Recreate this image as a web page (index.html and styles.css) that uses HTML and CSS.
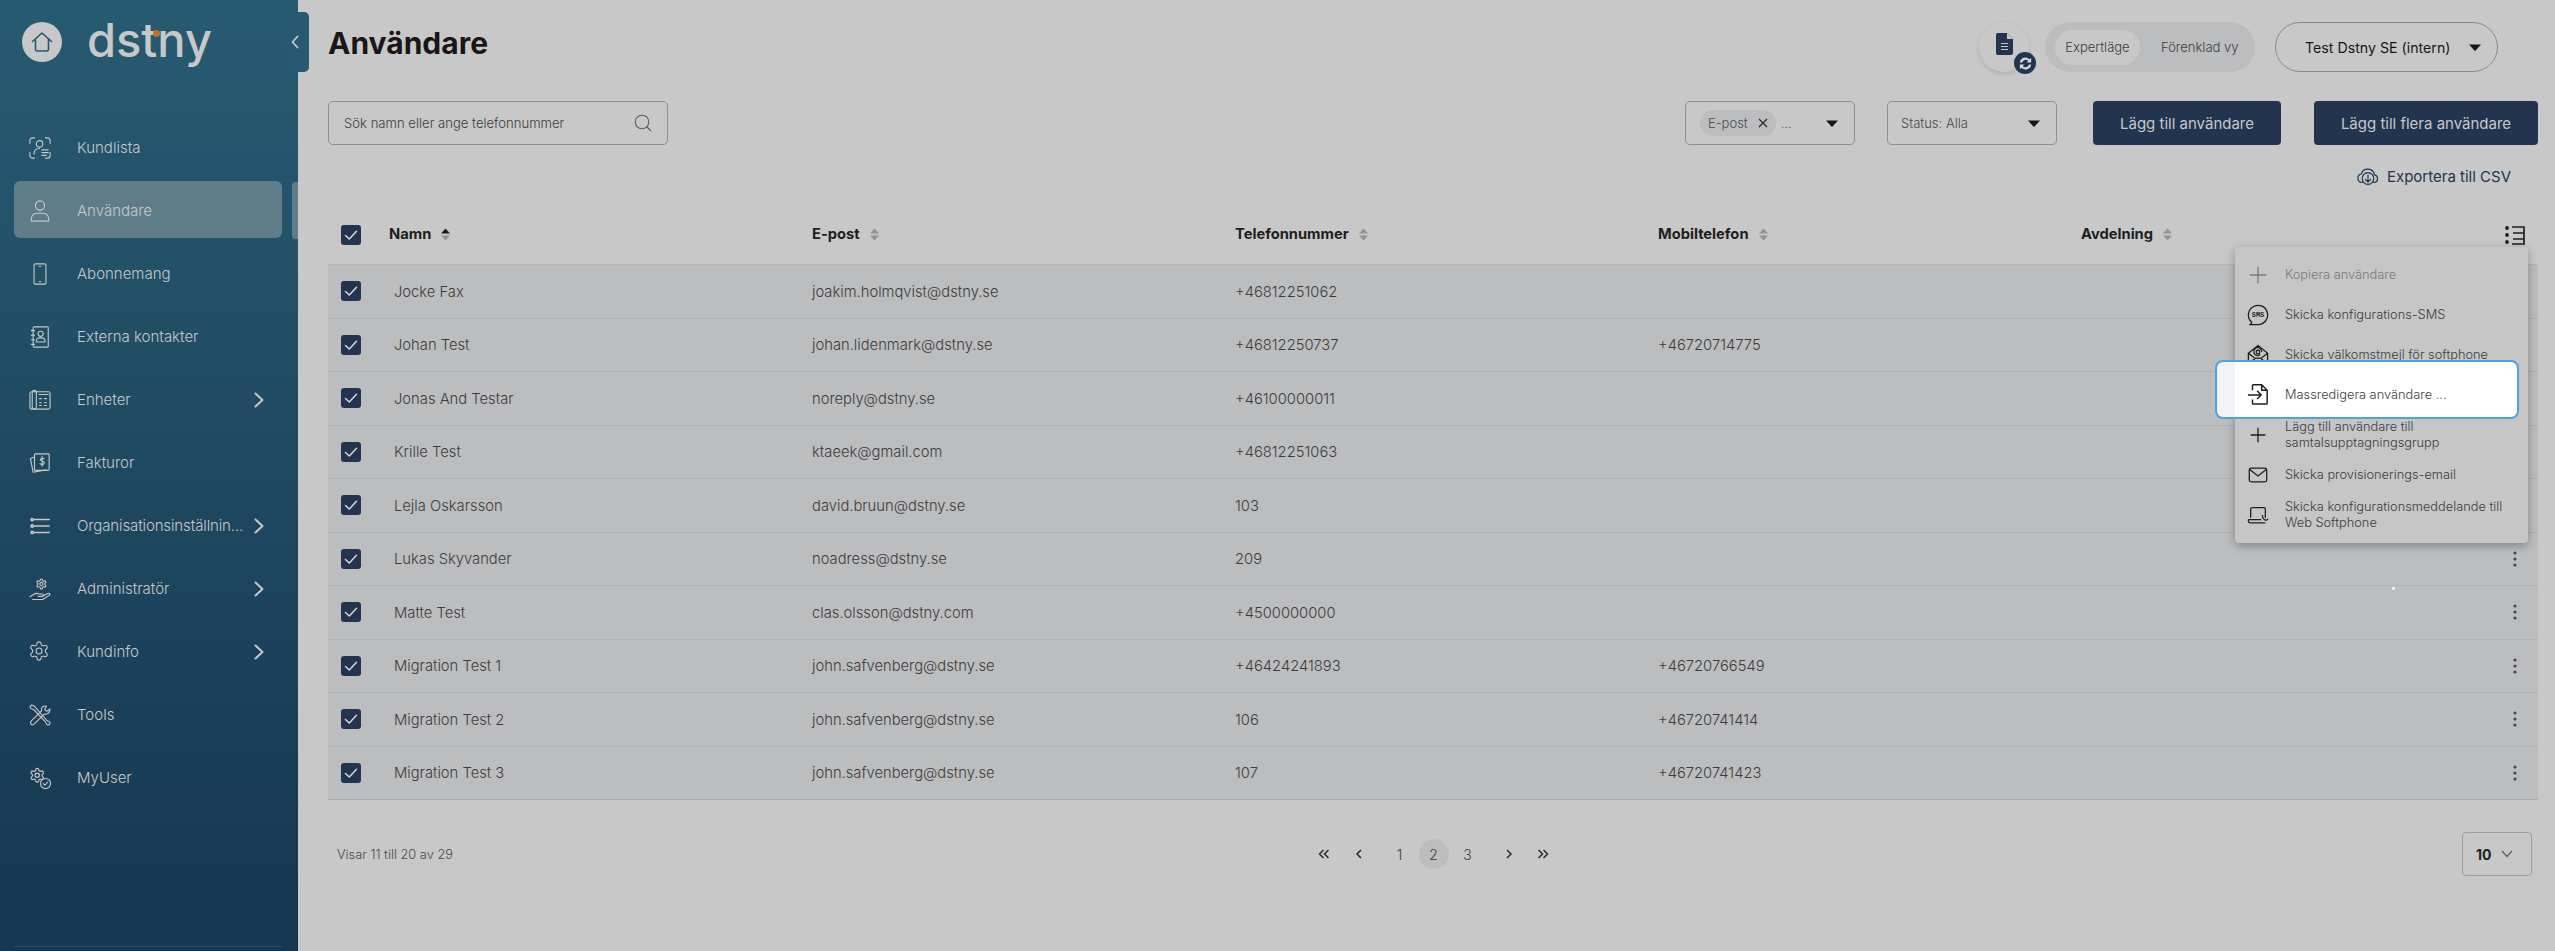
FILE: index.html
```html
<!DOCTYPE html>
<html lang="sv">
<head>
<meta charset="utf-8">
<title>Användare</title>
<link rel="stylesheet" href="styles.css">
</head>
<body>
<svg class="defs" width="0" height="0" aria-hidden="true">
  <symbol id="chev" viewBox="0 0 12 18"><path d="M2.500 2.500 9.500 9 2.500 15.500" fill="none" stroke="currentColor" stroke-width="2" stroke-linecap="round" stroke-linejoin="round"/></symbol>
  <symbol id="check" viewBox="0 0 20 20"><rect width="20" height="20" rx="3" fill="#22344f"/><path d="M4.500 10.500 8.300 14 15.500 6.300" fill="none" stroke="#d6d8da" stroke-width="1.500" stroke-linecap="round" stroke-linejoin="round"/></symbol>
  <symbol id="sort" viewBox="0 0 9 13"><path d="M4.500 .5 9 5.500H0Z" fill="currentColor"/><path d="M4.500 12.500 0 7.500H9Z" fill="#939496"/></symbol>
  <symbol id="sortoff" viewBox="0 0 9 13"><path d="M4.500 .5 9 5.500H0Z" fill="#939496"/><path d="M4.500 12.500 0 7.500H9Z" fill="#939496"/></symbol>
  <symbol id="kebab" viewBox="0 0 6 16"><circle cx="3" cy="2" r="1.600"/><circle cx="3" cy="8" r="1.600"/><circle cx="3" cy="14" r="1.600"/></symbol>
  <symbol id="caret" viewBox="0 0 12 7"><path d="M0 .5H12L6.600 6.400a.8.8 0 0 1-1.200 0Z" fill="currentColor"/></symbol>
  <symbol id="gear" viewBox="0 0 24 24" overflow="visible"><path d="M12.220 2h-.44a2 2 0 0 0-2 2v.18a2 2 0 0 1-1 1.730l-.43.250a2 2 0 0 1-2 0l-.15-.08a2 2 0 0 0-2.730.730l-.22.380a2 2 0 0 0 .730 2.730l.15.100a2 2 0 0 1 1 1.720v.510a2 2 0 0 1-1 1.740l-.15.090a2 2 0 0 0-.730 2.730l.22.380a2 2 0 0 0 2.730.730l.15-.08a2 2 0 0 1 2 0l.43.250a2 2 0 0 1 1 1.730V20a2 2 0 0 0 2 2h.44a2 2 0 0 0 2-2v-.18a2 2 0 0 1 1-1.730l.43-.25a2 2 0 0 1 2 0l.15.08a2 2 0 0 0 2.730-.730l.22-.39a2 2 0 0 0-.730-2.730l-.15-.08a2 2 0 0 1-1-1.740v-.5a2 2 0 0 1 1-1.740l.15-.09a2 2 0 0 0 .730-2.730l-.22-.38a2 2 0 0 0-2.730-.730l-.15.08a2 2 0 0 1-2 0l-.43-.25a2 2 0 0 1-1-1.730V4a2 2 0 0 0-2-2Z"/><circle cx="12" cy="12" r="3.200"/></symbol>
</svg>

<div class="app">
  <aside class="sidebar">
    <div class="brand">
      <span class="home">
        <svg width="22" height="22" viewBox="0 0 22 22"><path d="M1.500 10.500 11 2l9.500 8.500M4.500 8.500v9.500a2 2 0 0 0 2 2h9a2 2 0 0 0 2-2V8.500" fill="none" stroke="#27586e" stroke-width="1.600" stroke-linecap="round" stroke-linejoin="round"/></svg>
      </span>
      <span class="logo">dstny<i class="logo-dot"></i></span>
    </div>
    <button class="collapse" aria-label="Fäll ihop">
      <svg width="8" height="14" viewBox="0 0 8 14"><path d="M6.500 1.500 1.500 7l5 5.500" fill="none" stroke="#c8c8c8" stroke-width="1.800" stroke-linecap="round" stroke-linejoin="round"/></svg>
    </button>
    <nav class="nav">
      <a class="nav-item">
        <svg class="nav-icon" viewBox="0 0 24 24"><path d="M1 7V3.500A2.500 2.500 0 0 1 3.500 1H6M18 1h2.500A2.500 2.500 0 0 1 23 3.500V7M1 17v3.500A2.500 2.500 0 0 0 3.500 23H6M18 23h2.500a2.500 2.500 0 0 0 2.500-2.500V17"/><circle cx="11.500" cy="7.500" r="3.500"/><path d="M5.500 18.500c0-4 2.500-6 6-6M14 14h7M14 17h7M14 20h5"/></svg>
        <span class="nav-label">Kundlista</span>
      </a>
      <a class="nav-item active">
        <svg class="nav-icon" viewBox="0 0 24 24"><circle cx="12" cy="6" r="5"/><path d="M2.500 23v-2.500a6 6 0 0 1 6-6h7a6 6 0 0 1 6 6V23Z"/></svg>
        <span class="nav-label">Användare</span>
      </a>
      <a class="nav-item">
        <svg class="nav-icon" viewBox="0 0 24 24"><rect x="5.500" y="1" width="13" height="22" rx="1.500"/><path d="M11 3.500h2M11 20.500h2"/></svg>
        <span class="nav-label">Abonnemang</span>
      </a>
      <a class="nav-item">
        <svg class="nav-icon" viewBox="0 0 24 24"><rect x="4.500" y="1" width="16.500" height="22" rx="1"/><circle cx="12.700" cy="8.500" r="2.800"/><path d="M8 17.500v-1a3.500 3.500 0 0 1 3.500-3.500h2.500a3.500 3.500 0 0 1 3.500 3.500v1ZM2.500 5h3.500M2.500 10h3.500M2.500 15h3.500M2.500 20h3.500"/></svg>
        <span class="nav-label">Externa kontakter</span>
      </a>
      <a class="nav-item">
        <svg class="nav-icon" viewBox="0 0 24 24"><rect x="1" y="3" width="22" height="19" rx="2"/><rect x="3.500" y="1.500" width="4.500" height="20" rx="2"/><path d="M11 6h10M11.500 10.500h2M17 10.500h2M11.500 15h2M17 15h2M11.500 18h2M17 18h2"/></svg>
        <span class="nav-label">Enheter</span>
        <svg class="nav-chev"><use href="#chev"/></svg>
      </a>
      <a class="nav-item">
        <svg class="nav-icon" viewBox="0 0 24 24"><path d="M6 5.500 1.500 7l3 15 14-2.500"/><rect x="6" y="2" width="16" height="18" rx="1"/><path d="M16.500 7.500c-.8-1-3.800-1.200-4 .7-.2 2 4.200 1.300 4.200 3.600 0 2-3.200 2.200-4.700.9M14.300 4.500v11"/></svg>
        <span class="nav-label">Fakturor</span>
      </a>
      <a class="nav-item">
        <svg class="nav-icon nav-icon-bold" viewBox="0 0 24 24"><path d="M6 5h16M6 12h16M6 19h16"/><circle cx="3.500" cy="5" r="1.300"/><circle cx="3.500" cy="12" r="1.300"/><circle cx="3.500" cy="19" r="1.300"/></svg>
        <span class="nav-label nav-label-tight">Organisationsinställnin...</span>
        <svg class="nav-chev"><use href="#chev"/></svg>
      </a>
      <a class="nav-item">
        <svg class="nav-icon" viewBox="0 0 24 24"><svg x="7" y="0" width="13" height="13"><use href="#gear" class="gear-s"/></svg><path d="M1 20.500 5 18c2-1.500 4-1.500 6-.5h3.500c2 0 2 2.500 0 2.500H10M14.500 20l6-3c2-1 3 1 1.500 2l-7 4.500H7L4 23.500"/></svg>
        <span class="nav-label">Administratör</span>
        <svg class="nav-chev"><use href="#chev"/></svg>
      </a>
      <a class="nav-item">
        <svg class="nav-icon" viewBox="1 1 22 22"><use href="#gear"/></svg>
        <span class="nav-label">Kundinfo</span>
        <svg class="nav-chev"><use href="#chev"/></svg>
      </a>
      <a class="nav-item">
        <svg class="nav-icon" viewBox="0 0 24 24"><path d="M1 3l2-2 3 1.500L19.500 18l3 1.500.5 2-1.500 1.500-2-.5-1.500-3L5 6 2 5Z"/><path d="M23 5.500 19.500 8 17 6l2-3.500c-2.500-1-5.500.5-5.500 3.500 0 .8.200 1 .200 1.500L2.500 18.500C.5 21 3 24 5.500 22l11-11c3 1 6.500-1.500 6.500-5.500Z"/></svg>
        <span class="nav-label">Tools</span>
      </a>
      <a class="nav-item">
        <svg class="nav-icon" viewBox="0 0 24 24"><svg x="0" y="0" width="18" height="18"><use href="#gear" class="gear-m"/></svg><circle cx="18" cy="18" r="5.500" class="nav-badge"/><path d="M15.500 18.200l1.800 1.500 3.200-3.200"/></svg>
        <span class="nav-label">MyUser</span>
      </a>
    </nav>
    <div class="side-foot"></div>
  </aside>

  <main class="main">
    <header class="topbar">
      <h1 class="title">Användare</h1>
      <div class="top-tools">
        <span class="doc-btn">
          <svg width="17" height="22" viewBox="0 0 17 22"><path d="M2 0h9l6 6v14a2 2 0 0 1-2 2H2a2 2 0 0 1-2-2V2a2 2 0 0 1 2-2Z" fill="#22344f"/><path d="M11 0v6h6Z" fill="#c8c8c8"/><path d="M5 10.500h7M5 13.500h7M5 16.500h7" stroke="#c8c8c8" stroke-width="1.200"/></svg>
          <span class="sync">
            <svg width="15" height="15" viewBox="0 0 16 16"><path d="M2 7a6 6 0 0 1 10.300-3.500L14 2v5H9l2-1.800A4 4 0 0 0 4.300 7ZM14 9a6 6 0 0 1-10.300 3.500L2 14V9h5l-2 1.800A4 4 0 0 0 11.700 9Z" fill="#d6d8da"/></svg>
          </span>
        </span>
        <div class="mode">
          <span class="mode-item on">Expertläge</span>
          <span class="mode-item">Förenklad vy</span>
        </div>
        <div class="org">
          <span>Test Dstny SE (intern)</span>
          <svg class="caret"><use href="#caret"/></svg>
        </div>
      </div>
    </header>

    <div class="controls">
      <div class="search">
        <span>Sök namn eller ange telefonnummer</span>
        <svg width="18" height="18" viewBox="0 0 18 18"><circle cx="8" cy="8" r="6.800" fill="none" stroke="#5a5c5e" stroke-width="1.100"/><path d="M13 13l4 4" stroke="#5a5c5e" stroke-width="1.100"/></svg>
      </div>
      <div class="spacer"></div>
      <div class="select select-cols">
        <span class="chip">E-post
          <svg width="10" height="10" viewBox="0 0 10 10"><path d="M1 1l8 8M9 1l-8 8" stroke="#2b2b2b" stroke-width="1.300"/></svg>
        </span>
        <span class="more">...</span>
        <svg class="caret"><use href="#caret"/></svg>
      </div>
      <div class="select select-status">
        <span>Status: Alla</span>
        <svg class="caret"><use href="#caret"/></svg>
      </div>
      <button class="btn btn-one">Lägg till användare</button>
      <button class="btn btn-many">Lägg till flera användare</button>
    </div>

    <div class="export">
      <svg width="22" height="18" viewBox="0 0 22 18"><path d="M6 15.500H5a4.300 4.300 0 0 1-.7-8.500 6.800 6.800 0 0 1 13.200.8A3.900 3.900 0 0 1 17 15.500h-1" fill="none" stroke="#22344f" stroke-width="1.200" stroke-linecap="round"/><circle cx="11" cy="11.500" r="5.800" fill="#c8c8c8" stroke="#22344f" stroke-width="1.200"/><path d="M11 8v7M8.300 12.300 11 15l2.700-2.700" fill="none" stroke="#22344f" stroke-width="1.200" stroke-linecap="round" stroke-linejoin="round"/></svg>
      <span>Exportera till CSV</span>
    </div>

    <div class="table">
      <div class="thead">
        <div class="cell-check"><svg class="cb"><use href="#check"/></svg></div>
        <div class="th th-on">Namn <svg class="sort"><use href="#sort"/></svg></div>
        <div class="th">E-post <svg class="sort"><use href="#sortoff"/></svg></div>
        <div class="th">Telefonnummer <svg class="sort"><use href="#sortoff"/></svg></div>
        <div class="th">Mobiltelefon <svg class="sort"><use href="#sortoff"/></svg></div>
        <div class="th">Avdelning <svg class="sort"><use href="#sortoff"/></svg></div>
        <div class="cell-act">
          <svg width="20" height="20" viewBox="0 0 20 20"><circle cx="2" cy="3" r="1.900" fill="#1e1e1e"/><circle cx="2" cy="10" r="1.900" fill="#1e1e1e"/><circle cx="2" cy="17" r="1.900" fill="#1e1e1e"/><path d="M7 2h12v6H8M19 8v6H8M7 19h12v-5" fill="none" stroke="#1e1e1e" stroke-width="1.700"/></svg>
        </div>
      </div>

      <div class="tr"><div class="cell-check"><svg class="cb"><use href="#check"/></svg></div><div class="td td-name">Jocke Fax</div><div class="td">joakim.holmqvist@dstny.se</div><div class="td">+46812251062</div><div class="td"></div><div class="td"></div><div class="cell-act"><svg class="kebab"><use href="#kebab"/></svg></div></div>
      <div class="tr"><div class="cell-check"><svg class="cb"><use href="#check"/></svg></div><div class="td td-name">Johan Test</div><div class="td">johan.lidenmark@dstny.se</div><div class="td">+46812250737</div><div class="td">+46720714775</div><div class="td"></div><div class="cell-act"><svg class="kebab"><use href="#kebab"/></svg></div></div>
      <div class="tr"><div class="cell-check"><svg class="cb"><use href="#check"/></svg></div><div class="td td-name">Jonas And Testar</div><div class="td">noreply@dstny.se</div><div class="td">+46100000011</div><div class="td"></div><div class="td"></div><div class="cell-act"><svg class="kebab"><use href="#kebab"/></svg></div></div>
      <div class="tr"><div class="cell-check"><svg class="cb"><use href="#check"/></svg></div><div class="td td-name">Krille Test</div><div class="td">ktaeek@gmail.com</div><div class="td">+46812251063</div><div class="td"></div><div class="td"></div><div class="cell-act"><svg class="kebab"><use href="#kebab"/></svg></div></div>
      <div class="tr"><div class="cell-check"><svg class="cb"><use href="#check"/></svg></div><div class="td td-name">Lejla Oskarsson</div><div class="td">david.bruun@dstny.se</div><div class="td">103</div><div class="td"></div><div class="td"></div><div class="cell-act"><svg class="kebab"><use href="#kebab"/></svg></div></div>
      <div class="tr"><div class="cell-check"><svg class="cb"><use href="#check"/></svg></div><div class="td td-name">Lukas Skyvander</div><div class="td">noadress@dstny.se</div><div class="td">209</div><div class="td"></div><div class="td"></div><div class="cell-act"><svg class="kebab"><use href="#kebab"/></svg></div></div>
      <div class="tr"><div class="cell-check"><svg class="cb"><use href="#check"/></svg></div><div class="td td-name">Matte Test</div><div class="td">clas.olsson@dstny.com</div><div class="td">+4500000000</div><div class="td"></div><div class="td"></div><div class="cell-act"><svg class="kebab"><use href="#kebab"/></svg></div></div>
      <div class="tr"><div class="cell-check"><svg class="cb"><use href="#check"/></svg></div><div class="td td-name">Migration Test 1</div><div class="td">john.safvenberg@dstny.se</div><div class="td">+46424241893</div><div class="td">+46720766549</div><div class="td"></div><div class="cell-act"><svg class="kebab"><use href="#kebab"/></svg></div></div>
      <div class="tr"><div class="cell-check"><svg class="cb"><use href="#check"/></svg></div><div class="td td-name">Migration Test 2</div><div class="td">john.safvenberg@dstny.se</div><div class="td">106</div><div class="td">+46720741414</div><div class="td"></div><div class="cell-act"><svg class="kebab"><use href="#kebab"/></svg></div></div>
      <div class="tr"><div class="cell-check"><svg class="cb"><use href="#check"/></svg></div><div class="td td-name">Migration Test 3</div><div class="td">john.safvenberg@dstny.se</div><div class="td">107</div><div class="td">+46720741423</div><div class="td"></div><div class="cell-act"><svg class="kebab"><use href="#kebab"/></svg></div></div>
    </div>

    <footer class="pager">
      <div class="count">Visar 11 till 20 av 29</div>
      <div class="pages">
        <svg class="pg" viewBox="0 0 12 12"><path d="M5.500 2 1.500 6l4 4M10.500 2l-4 4 4 4"/></svg>
        <svg class="pg pg-gap" viewBox="0 0 12 12"><path d="M8 2 4 6l4 4"/></svg>
        <span class="num">1</span>
        <span class="num cur">2</span>
        <span class="num">3</span>
        <svg class="pg pg-gap2" viewBox="0 0 12 12"><path d="M4 2l4 4-4 4"/></svg>
        <svg class="pg" viewBox="0 0 12 12"><path d="M1.500 2l4 4-4 4M6.500 2l4 4-4 4"/></svg>
      </div>
      <div class="size-wrap">
        <div class="size">
          <b>10</b>
          <svg width="12" height="8" viewBox="0 0 12 8"><path d="M1 1l5 5.500L11 1" fill="none" stroke="#5a5c5e" stroke-width="1.200"/></svg>
        </div>
      </div>
    </footer>
  </main>
</div>

<div class="menu">
  <div class="mi mi-off"><svg class="mi-ic" viewBox="0 0 24 24"><path d="M12 3v18M3 12h18"/></svg><span>Kopiera användare</span></div>
  <div class="mi"><svg class="mi-ic" viewBox="0 0 24 24"><path d="M3 22.500c1.500-.5 2-1.500 2.200-2.500A10.500 10.500 0 1 1 12 22.500Z"/><text x="12" y="14.700" class="sms">SMS</text></svg><span>Skicka konfigurations-SMS</span></div>
  <div class="mi"><svg class="mi-ic" viewBox="0 0 24 24"><path d="M1.500 10 12 1.500 22.500 10v12h-21ZM1.500 22 9 15.500h6L22.500 22M1.500 10l6.500 5M22.500 10 16 15"/><circle cx="12" cy="8.800" r="2"/><path d="M14.500 11.500a4.300 4.300 0 1 1 1.500-2.800"/></svg><span>Skicka välkomstmejl för softphone</span></div>
  <div class="mi"></div>
  <div class="mi"><svg class="mi-ic" viewBox="0 0 24 24"><path d="M12 4v16M4 12h16"/></svg><span>Lägg till användare till<br>samtalsupptagningsgrupp</span></div>
  <div class="mi"><svg class="mi-ic" viewBox="0 0 24 24"><rect x="2.500" y="4.500" width="19" height="15" rx="2"/><path d="M3 6l9 7 9-7"/></svg><span>Skicka provisionerings-email</span></div>
  <div class="mi"><svg class="mi-ic" viewBox="0 0 24 24"><path d="M4 15V5.500A1.500 1.500 0 0 1 5.500 4h13A1.500 1.500 0 0 1 20 5.500V15M1.500 17h14M1.500 17v1.500a2 2 0 0 0 2 2H20M17 12c-.5 2 .8 5 3 5.500 1 .2 2.500 0 2.500-1.500"/></svg><span>Skicka konfigurationsmeddelande till<br>Web Softphone</span></div>
</div>

<div class="spot">
  <div class="spot-inner">
    <svg class="spot-ic" viewBox="0 0 24 24"><path d="M6 8V3a1 1 0 0 1 1-1h9l6 6v14a1 1 0 0 1-1 1H7a1 1 0 0 1-1-1v-4M16 2v6h6M1 13h14M11 8.500l4.500 4.500-4.500 4.500"/></svg>
    <span>Massredigera användare ...</span>
  </div>
</div>
<i class="blip"></i>
</body>
</html>
```

FILE: styles.css
```css
* { box-sizing: border-box; }
html, body { margin: 0; height: 100%; }
body {
  background: #c8c8c8;
  font-family: Inter, "Liberation Sans", sans-serif;
  color: #2b2b2b;
  overflow: hidden;
  position: relative;
}
.defs { position: absolute; }
.app { display: flex; height: 951px; }

/* sidebar */
.sidebar {
  width: 298px;
  flex: none;
  position: relative;
  background: linear-gradient(180deg, #275b71 0%, #173650 100%);
  color: #c8c8c8;
  display: flex;
  flex-direction: column;
}
.brand { height: 115px; padding: 22px 0 0 22px; display: flex; align-items: flex-start; gap: 25px; }
.home {
  width: 40px; height: 40px; border-radius: 50%; background: #c8c8c8;
  display: flex; align-items: center; justify-content: center;
}
.logo {
  position: relative;
  margin-top: -2px;
  font-family: Inter, sans-serif;
  font-size: 47px; line-height: 40px; font-weight: 500; color: #c8c8c8;
}
.logo-dot {
  position: absolute; left: 66px; top: 10px; width: 7px; height: 7px;
  border-radius: 50%; background: #bb7428;
}
.collapse {
  position: absolute; left: 286px; top: 12px; width: 23px; height: 60px; padding: 0 0 0 5px;
  background: #275a70; border: 0; border-radius: 0 5px 5px 0;
  display: flex; align-items: center;
}
.nav { display: flex; flex-direction: column; gap: 6px; padding: 3px 16px 0 14px; flex: 1; }
.nav-item {
  height: 57px; display: flex; align-items: center; border-radius: 6px;
  padding: 2px 17px 0 15px; position: relative;
  font-size: 15px; font-weight: 300; color: #c8c8c8;
}
.nav-item.active { background: #5f7d89; }
.nav-item.active::after {
  content: ""; position: absolute; left: 278px; top: 1px; width: 6px; height: 57px;
  background: #5f7d89; border-radius: 4px 0 0 4px;
}
.nav-icon {
  width: 22px; height: 22px; flex: none; margin-right: 26px;
  fill: none; stroke: #c8c8c8; stroke-width: 1.200; stroke-linecap: round; stroke-linejoin: round;
}
.nav-icon-bold { stroke-width: 1.600; }
.gear-s { stroke-width: 2.200; }
.gear-m { stroke-width: 1.700; }
.nav-badge { fill: #1f4059; }
.nav-label { flex: 1; white-space: nowrap; }
.nav-label-tight { flex: none; letter-spacing: -.12px; margin-right: 8px; }
.nav-chev { width: 12px; height: 18px; color: #c8c8c8; flex: none; margin-left: auto; }
.side-foot { height: 5px; margin: 0 16px 0 14px; border-top: 1px solid #2e4c63; }

/* main */
.main { flex: 1; min-width: 0; padding: 22px 17px 0 30px; display: flex; flex-direction: column; }
.topbar { display: flex; align-items: center; justify-content: space-between; height: 50px; }
.title { margin: 0; font-size: 30px; font-weight: 700; color: #1c1517; position: relative; top: -4px; }
.top-tools { display: flex; align-items: center; padding-right: 40px; }
.doc-btn {
  width: 50px; height: 50px; border-radius: 50%; position: relative;
  display: flex; align-items: center; justify-content: center; margin-right: 16px;
  background: #c8c8c8; box-shadow: 0 2px 5px rgba(0,0,0,.12);
}
.doc-btn svg { position: relative; top: -3px; }
.sync {
  position: absolute; left: 35px; top: 30px; width: 22px; height: 22px; border-radius: 50%;
  background: #22344f; display: flex; align-items: center; justify-content: center;
}
.doc-btn .sync svg { top: 0; }
.mode {
  width: 210px; height: 50px; border-radius: 25px; background: #bcbdbf;
  display: flex; align-items: center; padding-left: 10px; margin-right: 20px;
}
.mode-item { font-size: 13px; font-weight: 300; color: #3c3c3c; height: 35px; display: flex; align-items: center; justify-content: center; }
.mode-item:first-child { width: 85px; margin-right: 21px; }
.mode-item.on { background: #c8c8c8; border-radius: 18px; }
.org {
  width: 223px; height: 50px; border-radius: 25px; border: 1px solid #8a8a8a;
  display: flex; align-items: center; justify-content: space-between;
  padding: 0 16px 0 29px; font-size: 14.200px; color: #1c1517;
}
.caret { width: 12px; height: 7px; color: #1c1517; flex: none; }

.controls { display: flex; align-items: stretch; height: 44px; margin-top: 29px; }
.search {
  width: 340px; border: 1px solid #8f8f8f; border-radius: 5px;
  display: flex; align-items: center; justify-content: space-between;
  padding: 0 15px 0 15px; font-size: 13.100px; font-weight: 300; color: #3c3c3c;
}
.spacer { flex: 1; }
.select {
  border: 1px solid #8f8f8f; border-radius: 5px; display: flex; align-items: center;
  font-size: 13px; font-weight: 300; color: #4a4a4a;
}
.select-cols { width: 170px; padding: 0 16px 0 14px; margin-right: 32px; }
.select-status { width: 170px; padding: 0 16px 0 13px; margin-right: 36px; justify-content: space-between; }
.chip {
  height: 26px; border-radius: 13px; background: #bcbdbf; padding: 0 8px 0 8px;
  display: flex; align-items: center; gap: 10px; color: #4a4a4a;
}
.more { margin-left: 5px; flex: 1; }
.btn {
  height: 44px; border: 0; border-radius: 4px; background: #22344f; color: #c8c8c8;
  font-family: inherit; font-size: 15px; font-weight: 400; padding: 0;
}
.btn-one { width: 188px; margin-right: 33px; }
.btn-many { width: 224px; }

.export {
  display: flex; align-items: center; justify-content: flex-end; gap: 8px;
  height: 32px; margin-top: 15px; padding-right: 27px; font-size: 15px; color: #22344f;
}

/* table */
.table { display: flex; flex-direction: column; margin-top: 13px; }
.thead, .tr { display: grid; grid-template-columns: 61px 423px 423px 423px 423px 1fr 46px; align-items: center; }
.thead { height: 60px; border-bottom: 1px solid #b6b7b9; }
.tr { height: 53.500px; background: #bcbdbf; border-bottom: 1px solid #b2b3b5; }
.tr:last-child { border-bottom-color: #aaabad; }
.cell-check { padding-left: 13px; display: flex; align-items: center; }
.cb { width: 20px; height: 20px; }
.th { font-size: 14.700px; font-weight: 700; color: #1e1e1e; display: flex; align-items: center; gap: 10px; padding-bottom: 2px; }
.sort { width: 9px; height: 13px; color: #1e1e1e; position: relative; top: 1px; }
.td { font-size: 14.750px; font-weight: 300; color: #3c3c3c; white-space: nowrap; padding-top: 1px; }
.td-name { padding-left: 5px; }
.cell-act { display: flex; justify-content: center; padding-right: 0; }
.kebab { width: 6px; height: 16px; fill: #4a4a4a; }

/* pager */
.pager { display: grid; grid-template-columns: 1fr auto 1fr; align-items: center; margin-top: 32px; height: 44px; }
.count { padding-left: 9px; font-size: 12.800px; font-weight: 300; color: #4a4a4a; }
.pages { display: flex; align-items: center; }
.pg { width: 12px; height: 12px; fill: none; stroke: #2b2b2b; stroke-width: 1.500; }
.pg-gap { margin: 0 20px 0 23px; }
.pg-gap2 { margin: 0 22px 0 16px; }
.num { width: 30px; height: 30px; margin-right: 4px; display: flex; align-items: center; justify-content: center; font-size: 14px; font-weight: 300; color: #3c3c3c; }
.num.cur { background: #bcbdbf; border-radius: 50%; }
.size-wrap { display: flex; justify-content: flex-end; padding-right: 6px; }
.size {
  width: 70px; height: 44px; border: 1px solid #9a9ea3; border-radius: 4px;
  display: flex; align-items: center; gap: 10px; padding-left: 13px; font-size: 14px;
}
.size b { font-weight: 700; color: #1e1e1e; }

/* overlay menu */
.menu {
  position: absolute; left: 2235px; top: 247px; width: 293px; height: 296px;
  background: #c6c6c6; border-radius: 4px; box-shadow: 0 3px 10px rgba(0,0,0,.3);
  padding: 8px 0;
  display: flex; flex-direction: column;
}
.mi {
  height: 40px; display: flex; align-items: center; gap: 16px; padding-left: 12px;
  font-size: 12.800px; font-weight: 300; line-height: 16px; color: #3c3c3c; white-space: nowrap;
}
.mi-off { color: #7a7a7a; }
.mi-ic { width: 22px; height: 22px; flex: none; fill: none; stroke: #1e1e1e; stroke-width: 1.400; stroke-linejoin: round; }
.mi-off .mi-ic { stroke: #7a7a7a; }
.sms { font-family: "Liberation Mono", monospace; font-size: 7.500px; font-weight: 700; text-anchor: middle; stroke: none; fill: #1e1e1e; }

.spot {
  position: absolute; left: 2215px; top: 360px; width: 304px; height: 59px;
  border: 2px solid #4aa3e8; border-radius: 8px;
  background: linear-gradient(90deg, #f2f4f7 18px, #fff 18px);
  display: flex; align-items: center;
}
.spot-inner { display: flex; align-items: center; gap: 16px; padding: 9px 0 0 30px; font-size: 12.800px; font-weight: 300; color: #3c3c3c; }
.spot-ic { width: 22px; height: 22px; flex: none; fill: none; stroke: #1e1e1e; stroke-width: 1.600; stroke-linejoin: round; }
.blip { position: absolute; left: 2392px; top: 587px; width: 3px; height: 3px; background: #dfeeff; }
```
